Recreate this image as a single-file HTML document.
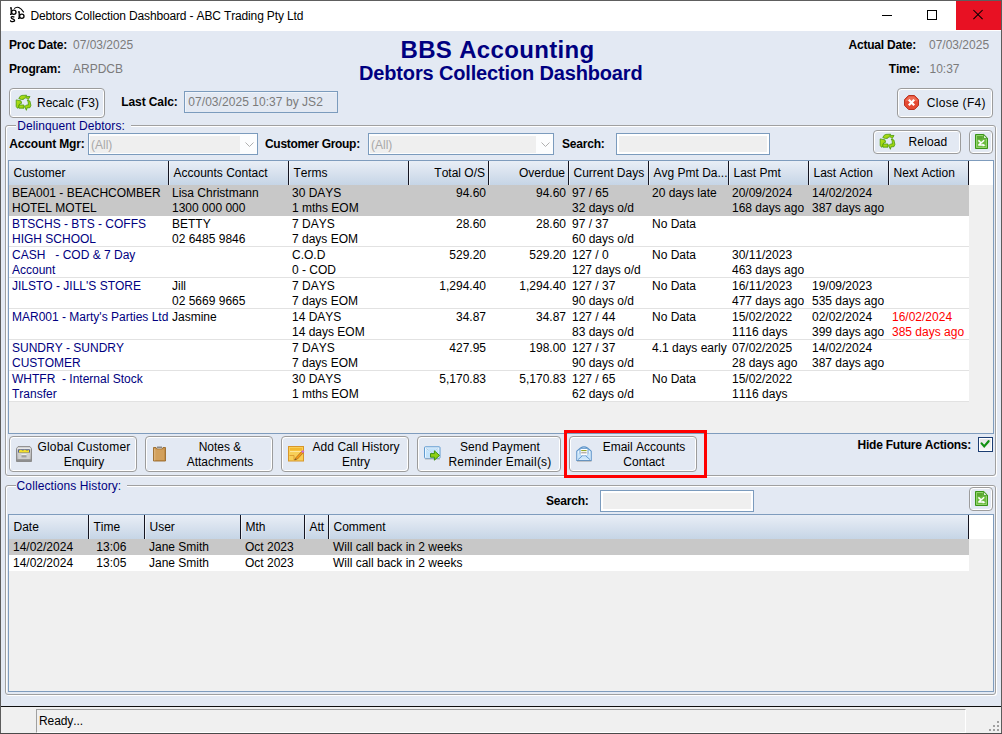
<!DOCTYPE html>
<html><head><meta charset="utf-8"><style>
*{margin:0;padding:0;box-sizing:content-box}
html,body{width:1002px;height:734px;overflow:hidden;background:#E3E9F3}
body{position:relative;font-family:"Liberation Sans",sans-serif;font-kerning:none;}
.t{position:absolute;white-space:pre;}
.r{position:absolute;}
.btn{border:1px solid #9c9c9c;border-radius:4px;box-shadow:inset 1px 1px 0 #fff, inset -1px -1px 0 #fff;background:#E3E9F3;}
.grp{border:1px solid #a0a0a0;border-radius:3px;box-shadow:inset 1px 1px 0 #fff, 1px 1px 0 #fff;}
svg{position:absolute;overflow:visible}
</style></head><body>

<div class="r" style="left:0px;top:0px;width:1002px;height:1px;background:#5e5e5e;"></div>
<div class="r" style="left:0px;top:0px;width:1px;height:734px;background:#5c5c5c;"></div>
<div class="r" style="left:1001px;top:0px;width:1px;height:734px;background:#5c5c5c;"></div>
<div class="r" style="left:0px;top:733px;width:1002px;height:1px;background:#4a4a4a;"></div>
<div class="r" style="left:1px;top:1px;width:1000px;height:30px;background:#fff;"></div>
<div class="r" style="left:956px;top:1px;width:45px;height:29px;background:#E81123;"></div>
<svg style="left:0;top:0" width="40" height="31" viewBox="0 0 40 31">
<g fill="none" stroke="#000" stroke-width="1.3">
<path d="M10 7.9 H11.2 V14.4 M10 14.4 H11.6"/>
<ellipse cx="13.8" cy="12.2" rx="2.2" ry="2.1"/>
<path d="M18 11.9 H19.2 V18.4 M18 18.4 H19.6"/>
<ellipse cx="21.8" cy="16.2" rx="2.2" ry="2.1"/>
<path d="M14.2 8.6 Q18.6 4.6 23.8 12.4" stroke-width="1.1"/>
<path d="M14.4 17.2 Q12.8 16 11.4 16.9 Q10.6 18.2 12.6 18.9 Q14.9 19.6 14.5 21.1 Q13 22.3 10.6 21.2 M10.6 20.2 V21.4" stroke-width="1.25"/>
</g></svg>
<div class="t" style="left:30.4px;top:8.84px;font-size:12px;line-height:14px;color:#000;letter-spacing:-0.147px;">Debtors Collection Dashboard - ABC Trading Pty Ltd</div>
<div class="r" style="left:882px;top:15px;width:10px;height:1px;background:#000;"></div>
<div class="r" style="left:927px;top:10px;width:8px;height:8px;border:1px solid #000;"></div>
<svg style="left:956px;top:1px" width="45" height="29" viewBox="0 0 45 29">
<path d="M17.4 9 L26.6 18.2 M26.6 9 L17.4 18.2" stroke="#000" stroke-width="1.05" fill="none"/></svg>
<div class="t" style="left:9px;top:37.84px;font-size:12px;line-height:14px;color:#000;font-weight:bold;letter-spacing:-0.2px;">Proc Date:</div>
<div class="t" style="left:73px;top:37.84px;font-size:12px;line-height:14px;color:#7B7B7B;">07/03/2025</div>
<div class="t" style="left:9px;top:61.84px;font-size:12px;line-height:14px;color:#000;font-weight:bold;letter-spacing:-0.2px;">Program:</div>
<div class="t" style="left:73px;top:61.84px;font-size:12px;line-height:14px;color:#7B7B7B;">ARPDCB</div>
<div class="t" style="left:400.5px;top:35.68px;font-size:24px;line-height:28px;color:#000080;font-weight:bold;letter-spacing:0.33px;">BBS Accounting</div>
<div class="t" style="left:359px;top:61.57px;font-size:20px;line-height:23px;color:#000080;font-weight:bold;letter-spacing:-0.155px;">Debtors Collection Dashboard</div>
<div class="t" style="left:848.5px;top:37.84px;font-size:12px;line-height:14px;color:#000;font-weight:bold;letter-spacing:-0.2px;">Actual Date:</div>
<div class="t" style="left:929px;top:37.84px;font-size:12px;line-height:14px;color:#7B7B7B;">07/03/2025</div>
<div class="t" style="left:888.8px;top:61.84px;font-size:12px;line-height:14px;color:#000;font-weight:bold;letter-spacing:-0.2px;">Time:</div>
<div class="t" style="left:929.5px;top:61.84px;font-size:12px;line-height:14px;color:#7B7B7B;">10:37</div>
<div class="r btn" style="left:9px;top:88px;width:94px;height:28px;"></div>
<svg style="left:16px;top:95px" width="16" height="16" viewBox="0 0 16 16">
<defs><linearGradient id="rg16" x1="0" y1="0" x2="1" y2="1"><stop offset="0" stop-color="#b8e41a"/><stop offset="1" stop-color="#8cc80c"/></linearGradient></defs>
<g stroke="#4a9a08" stroke-width="0.8" fill="url(#rg16)" stroke-linejoin="round">
<path d="M2.8 3.6 Q3.6 0.8 6 0.4 L10.6 0.2 L9.8 1.4 L14 1.5 L12.2 4.6 L11.2 3.4 Q10.2 2.6 8.6 3 L7.8 4.2 L5.6 4.6 Z"/>
<path d="M0.2 4.9 L5 5.9 L5.6 8.3 L3.6 9 L2.8 12.4 L1.4 13.2 L0.2 11.4 Z"/>
<path d="M2.9 10 H8 V13.2 H2.9 Z"/>
<path d="M11.2 5.1 L13.9 6 L14.9 10.4 L14 12.6 L11 12.9 L10.4 15.3 L8.6 11.4 L11 9.9 L12.4 10 L12.2 6.9 Z"/>
</g></svg>
<div class="t" style="left:37px;top:95.84px;font-size:12px;line-height:14px;color:#000;">Recalc (F3)</div>
<div class="t" style="left:121.3px;top:94.84px;font-size:12px;line-height:14px;color:#000;font-weight:bold;letter-spacing:-0.1px;">Last Calc:</div>
<div class="r" style="left:184px;top:91px;width:152px;height:20px;border:1px solid #7b9bbd;background:#E3E9F3;box-shadow:inset 1px 1px 0 #F0F4FA;"></div>
<div class="t" style="left:188.3px;top:94.84px;font-size:12px;line-height:14px;color:#7B7B7B;letter-spacing:0.05px;">07/03/2025 10:37 by JS2</div>
<div class="r btn" style="left:897px;top:88px;width:94px;height:28px;"></div>
<svg style="left:904px;top:95px" width="15" height="15" viewBox="0 0 15 15">
<path d="M4.6 0.5 H10.4 L14.5 4.6 V10.4 L10.4 14.5 H4.6 L0.5 10.4 V4.6 Z" fill="#e44a33" stroke="#b83220" stroke-width="1"/>
<path d="M5 1.6 H10 L13.4 5 V6.5 Q7.5 4.2 1.6 6.5 V5 Z" fill="#f58a72" opacity="0.55"/>
<path d="M4.8 4.8 L10.2 10.2 M10.2 4.8 L4.8 10.2" stroke="#fff" stroke-width="2.3"/>
</svg>
<div class="t" style="left:926.8px;top:95.84px;font-size:12px;line-height:14px;color:#000;letter-spacing:0.3px;">Close (F4)</div>
<div class="r grp" style="left:5px;top:125px;width:989px;height:349px;"></div>
<div class="r" style="left:16px;top:123px;width:115px;height:5px;background:#E3E9F3;"></div>
<div class="t" style="left:17.3px;top:118.84px;font-size:12px;line-height:14px;color:#000080;letter-spacing:0.08px;">Delinquent Debtors:</div>
<div class="t" style="left:9.3px;top:136.84px;font-size:12px;line-height:14px;color:#000;font-weight:bold;letter-spacing:-0.17px;">Account Mgr:</div>
<div class="r" style="left:88px;top:133px;width:168px;height:20px;border:1px solid #7b9bbd;background:#FCFDFE;"></div>
<div class="r" style="left:90px;top:136px;width:150px;height:17px;background:#EFEFEF;"></div>
<svg style="left:245px;top:142px" width="9" height="6" viewBox="0 0 9 6"><path d="M0.5 0.5 L4.5 4.5 L8.5 0.5" stroke="#b0b0b0" stroke-width="1" fill="none"/></svg>
<div class="t" style="left:91px;top:137.84px;font-size:12px;line-height:14px;color:#A8A8A8;">(All)</div>
<div class="t" style="left:265px;top:136.84px;font-size:12px;line-height:14px;color:#000;font-weight:bold;letter-spacing:-0.3px;">Customer Group:</div>
<div class="r" style="left:368px;top:133px;width:184px;height:20px;border:1px solid #7b9bbd;background:#FCFDFE;"></div>
<div class="r" style="left:370px;top:136px;width:166px;height:17px;background:#EFEFEF;"></div>
<svg style="left:541px;top:142px" width="9" height="6" viewBox="0 0 9 6"><path d="M0.5 0.5 L4.5 4.5 L8.5 0.5" stroke="#b0b0b0" stroke-width="1" fill="none"/></svg>
<div class="t" style="left:371px;top:137.84px;font-size:12px;line-height:14px;color:#A8A8A8;">(All)</div>
<div class="t" style="left:562px;top:136.84px;font-size:12px;line-height:14px;color:#000;font-weight:bold;letter-spacing:-0.2px;">Search:</div>
<div class="r" style="left:616px;top:133px;width:152px;height:20px;border:1px solid #7b9bbd;background:#fff;"></div>
<div class="r" style="left:619px;top:136px;width:148px;height:16px;background:#EFEFEF;"></div>
<div class="r btn" style="left:873px;top:130px;width:86px;height:22px;"></div>
<svg style="left:880px;top:134px" width="16" height="16" viewBox="0 0 16 16">
<defs><linearGradient id="rg880" x1="0" y1="0" x2="1" y2="1"><stop offset="0" stop-color="#b8e41a"/><stop offset="1" stop-color="#8cc80c"/></linearGradient></defs>
<g stroke="#4a9a08" stroke-width="0.8" fill="url(#rg880)" stroke-linejoin="round">
<path d="M2.8 3.6 Q3.6 0.8 6 0.4 L10.6 0.2 L9.8 1.4 L14 1.5 L12.2 4.6 L11.2 3.4 Q10.2 2.6 8.6 3 L7.8 4.2 L5.6 4.6 Z"/>
<path d="M0.2 4.9 L5 5.9 L5.6 8.3 L3.6 9 L2.8 12.4 L1.4 13.2 L0.2 11.4 Z"/>
<path d="M2.9 10 H8 V13.2 H2.9 Z"/>
<path d="M11.2 5.1 L13.9 6 L14.9 10.4 L14 12.6 L11 12.9 L10.4 15.3 L8.6 11.4 L11 9.9 L12.4 10 L12.2 6.9 Z"/>
</g></svg>
<div class="t" style="left:908.5px;top:134.84px;font-size:12px;line-height:14px;color:#000;letter-spacing:0.15px;">Reload</div>
<div class="r btn" style="left:969px;top:130px;width:22px;height:22px;"></div>
<svg style="left:975px;top:134px" width="14" height="16" viewBox="0 0 14 16">
<path d="M0.5 0.5 H8.8 L12.5 4.2 V14.5 H0.5 Z" fill="#6cbb40" stroke="#3a9418" stroke-width="1"/>
<path d="M1.5 1.5 H8.4 L11.5 4.6 V13.5 H1.5 Z" fill="none" stroke="#96d672" stroke-width="0.9"/>
<rect x="2" y="2" width="5.5" height="3.5" fill="#5aa832"/>
<path d="M8.6 0.8 L12.2 4.4 H8.6 Z" fill="#fff" stroke="#3a9418" stroke-width="0.8"/>
<path d="M3.4 6.4 L6.4 9.2 M9.2 6.3 L3.8 10.9 M3.2 10.9 H8" stroke="#fff" stroke-width="1.5" fill="none"/>
<path d="M7.4 9.4 L10.6 11.2 L7.8 12.6 Z" fill="#fff"/>
</svg>
<div class="r" style="left:8px;top:160px;width:984px;height:272px;border:1px solid #7f9cbd;background:#F0F0F0;"></div>
<div class="r" style="left:9px;top:161px;width:960px;height:24px;background:linear-gradient(#E9EEF6,#C6D5E6);"></div>
<div class="r" style="left:969px;top:161px;width:24px;height:24px;background:#fff;"></div>
<div class="r" style="left:168px;top:161px;width:1px;height:24px;background:#141420;"></div>
<div class="r" style="left:169px;top:161px;width:1px;height:24px;background:rgba(255,255,255,0.5);"></div>
<div class="r" style="left:288px;top:161px;width:1px;height:24px;background:#141420;"></div>
<div class="r" style="left:289px;top:161px;width:1px;height:24px;background:rgba(255,255,255,0.5);"></div>
<div class="r" style="left:408px;top:161px;width:1px;height:24px;background:#141420;"></div>
<div class="r" style="left:409px;top:161px;width:1px;height:24px;background:rgba(255,255,255,0.5);"></div>
<div class="r" style="left:488px;top:161px;width:1px;height:24px;background:#141420;"></div>
<div class="r" style="left:489px;top:161px;width:1px;height:24px;background:rgba(255,255,255,0.5);"></div>
<div class="r" style="left:568px;top:161px;width:1px;height:24px;background:#141420;"></div>
<div class="r" style="left:569px;top:161px;width:1px;height:24px;background:rgba(255,255,255,0.5);"></div>
<div class="r" style="left:648px;top:161px;width:1px;height:24px;background:#141420;"></div>
<div class="r" style="left:649px;top:161px;width:1px;height:24px;background:rgba(255,255,255,0.5);"></div>
<div class="r" style="left:728px;top:161px;width:1px;height:24px;background:#141420;"></div>
<div class="r" style="left:729px;top:161px;width:1px;height:24px;background:rgba(255,255,255,0.5);"></div>
<div class="r" style="left:808px;top:161px;width:1px;height:24px;background:#141420;"></div>
<div class="r" style="left:809px;top:161px;width:1px;height:24px;background:rgba(255,255,255,0.5);"></div>
<div class="r" style="left:888px;top:161px;width:1px;height:24px;background:#141420;"></div>
<div class="r" style="left:889px;top:161px;width:1px;height:24px;background:rgba(255,255,255,0.5);"></div>
<div class="r" style="left:968px;top:161px;width:1px;height:24px;background:#141420;"></div>
<div class="r" style="left:969px;top:161px;width:1px;height:24px;background:rgba(255,255,255,0.5);"></div>
<div class="r" style="left:9px;top:185px;width:960px;height:217px;background:#fff;"></div>
<div class="r" style="left:9px;top:185px;width:960px;height:31px;background:#C8C8C8;"></div>
<div class="r" style="left:9px;top:246px;width:960px;height:1px;background:#E2E2E2;"></div>
<div class="r" style="left:9px;top:277px;width:960px;height:1px;background:#E2E2E2;"></div>
<div class="r" style="left:9px;top:308px;width:960px;height:1px;background:#E2E2E2;"></div>
<div class="r" style="left:9px;top:339px;width:960px;height:1px;background:#E2E2E2;"></div>
<div class="r" style="left:9px;top:370px;width:960px;height:1px;background:#E2E2E2;"></div>
<div class="r" style="left:9px;top:401px;width:960px;height:1px;background:#E2E2E2;"></div>
<div class="t" style="left:13.5px;top:165.84px;font-size:12px;line-height:14px;color:#000;">Customer</div>
<div class="t" style="left:173.5px;top:165.84px;font-size:12px;line-height:14px;color:#000;">Accounts Contact</div>
<div class="t" style="left:293.5px;top:165.84px;font-size:12px;line-height:14px;color:#000;">Terms</div>
<div class="t" style="right:517px;top:165.84px;font-size:12px;line-height:14px;color:#000;text-align:right;">Total O/S</div>
<div class="t" style="right:437px;top:165.84px;font-size:12px;line-height:14px;color:#000;text-align:right;">Overdue</div>
<div class="t" style="left:573.5px;top:165.84px;font-size:12px;line-height:14px;color:#000;">Current Days</div>
<div class="t" style="left:653.5px;top:165.84px;font-size:12px;line-height:14px;color:#000;">Avg Pmt Da...</div>
<div class="t" style="left:733.5px;top:165.84px;font-size:12px;line-height:14px;color:#000;">Last Pmt</div>
<div class="t" style="left:813.5px;top:165.84px;font-size:12px;line-height:14px;color:#000;">Last Action</div>
<div class="t" style="left:893.5px;top:165.84px;font-size:12px;line-height:14px;color:#000;">Next Action</div>
<div class="t" style="left:12px;top:185.84px;font-size:12px;line-height:14px;color:#000;">BEA001 - BEACHCOMBER</div>
<div class="t" style="left:12px;top:200.84px;font-size:12px;line-height:14px;color:#000;">HOTEL MOTEL</div>
<div class="t" style="left:172px;top:185.84px;font-size:12px;line-height:14px;color:#000;">Lisa Christmann</div>
<div class="t" style="left:172px;top:200.84px;font-size:12px;line-height:14px;color:#000;">1300 000 000</div>
<div class="t" style="left:292px;top:185.84px;font-size:12px;line-height:14px;color:#000;">30 DAYS</div>
<div class="t" style="left:292px;top:200.84px;font-size:12px;line-height:14px;color:#000;">1 mths EOM</div>
<div class="t" style="right:516px;top:185.84px;font-size:12px;line-height:14px;color:#000;text-align:right;">94.60</div>
<div class="t" style="right:436px;top:185.84px;font-size:12px;line-height:14px;color:#000;text-align:right;">94.60</div>
<div class="t" style="left:572px;top:185.84px;font-size:12px;line-height:14px;color:#000;">97 / 65</div>
<div class="t" style="left:572px;top:200.84px;font-size:12px;line-height:14px;color:#000;">32 days o/d</div>
<div class="t" style="left:652px;top:185.84px;font-size:12px;line-height:14px;color:#000;">20 days late</div>
<div class="t" style="left:732px;top:185.84px;font-size:12px;line-height:14px;color:#000;">20/09/2024</div>
<div class="t" style="left:732px;top:200.84px;font-size:12px;line-height:14px;color:#000;">168 days ago</div>
<div class="t" style="left:812px;top:185.84px;font-size:12px;line-height:14px;color:#000;">14/02/2024</div>
<div class="t" style="left:812px;top:200.84px;font-size:12px;line-height:14px;color:#000;">387 days ago</div>
<div class="t" style="left:12px;top:216.84px;font-size:12px;line-height:14px;color:#000080;">BTSCHS - BTS - COFFS</div>
<div class="t" style="left:12px;top:231.84px;font-size:12px;line-height:14px;color:#000080;">HIGH SCHOOL</div>
<div class="t" style="left:172px;top:216.84px;font-size:12px;line-height:14px;color:#000;">BETTY</div>
<div class="t" style="left:172px;top:231.84px;font-size:12px;line-height:14px;color:#000;">02 6485 9846</div>
<div class="t" style="left:292px;top:216.84px;font-size:12px;line-height:14px;color:#000;">7 DAYS</div>
<div class="t" style="left:292px;top:231.84px;font-size:12px;line-height:14px;color:#000;">7 days EOM</div>
<div class="t" style="right:516px;top:216.84px;font-size:12px;line-height:14px;color:#000;text-align:right;">28.60</div>
<div class="t" style="right:436px;top:216.84px;font-size:12px;line-height:14px;color:#000;text-align:right;">28.60</div>
<div class="t" style="left:572px;top:216.84px;font-size:12px;line-height:14px;color:#000;">97 / 37</div>
<div class="t" style="left:572px;top:231.84px;font-size:12px;line-height:14px;color:#000;">60 days o/d</div>
<div class="t" style="left:652px;top:216.84px;font-size:12px;line-height:14px;color:#000;">No Data</div>
<div class="t" style="left:12px;top:247.84px;font-size:12px;line-height:14px;color:#000080;">CASH   - COD &amp; 7 Day</div>
<div class="t" style="left:12px;top:262.84px;font-size:12px;line-height:14px;color:#000080;">Account</div>
<div class="t" style="left:292px;top:247.84px;font-size:12px;line-height:14px;color:#000;">C.O.D</div>
<div class="t" style="left:292px;top:262.84px;font-size:12px;line-height:14px;color:#000;">0 - COD</div>
<div class="t" style="right:516px;top:247.84px;font-size:12px;line-height:14px;color:#000;text-align:right;">529.20</div>
<div class="t" style="right:436px;top:247.84px;font-size:12px;line-height:14px;color:#000;text-align:right;">529.20</div>
<div class="t" style="left:572px;top:247.84px;font-size:12px;line-height:14px;color:#000;">127 / 0</div>
<div class="t" style="left:572px;top:262.84px;font-size:12px;line-height:14px;color:#000;">127 days o/d</div>
<div class="t" style="left:652px;top:247.84px;font-size:12px;line-height:14px;color:#000;">No Data</div>
<div class="t" style="left:732px;top:247.84px;font-size:12px;line-height:14px;color:#000;">30/11/2023</div>
<div class="t" style="left:732px;top:262.84px;font-size:12px;line-height:14px;color:#000;">463 days ago</div>
<div class="t" style="left:12px;top:278.84px;font-size:12px;line-height:14px;color:#000080;">JILSTO - JILL'S STORE</div>
<div class="t" style="left:172px;top:278.84px;font-size:12px;line-height:14px;color:#000;">Jill</div>
<div class="t" style="left:172px;top:293.84px;font-size:12px;line-height:14px;color:#000;">02 5669 9665</div>
<div class="t" style="left:292px;top:278.84px;font-size:12px;line-height:14px;color:#000;">7 DAYS</div>
<div class="t" style="left:292px;top:293.84px;font-size:12px;line-height:14px;color:#000;">7 days EOM</div>
<div class="t" style="right:516px;top:278.84px;font-size:12px;line-height:14px;color:#000;text-align:right;">1,294.40</div>
<div class="t" style="right:436px;top:278.84px;font-size:12px;line-height:14px;color:#000;text-align:right;">1,294.40</div>
<div class="t" style="left:572px;top:278.84px;font-size:12px;line-height:14px;color:#000;">127 / 37</div>
<div class="t" style="left:572px;top:293.84px;font-size:12px;line-height:14px;color:#000;">90 days o/d</div>
<div class="t" style="left:652px;top:278.84px;font-size:12px;line-height:14px;color:#000;">No Data</div>
<div class="t" style="left:732px;top:278.84px;font-size:12px;line-height:14px;color:#000;">16/11/2023</div>
<div class="t" style="left:732px;top:293.84px;font-size:12px;line-height:14px;color:#000;">477 days ago</div>
<div class="t" style="left:812px;top:278.84px;font-size:12px;line-height:14px;color:#000;">19/09/2023</div>
<div class="t" style="left:812px;top:293.84px;font-size:12px;line-height:14px;color:#000;">535 days ago</div>
<div class="t" style="left:12px;top:309.84px;font-size:12px;line-height:14px;color:#000080;">MAR001 - Marty's Parties Ltd</div>
<div class="t" style="left:172px;top:309.84px;font-size:12px;line-height:14px;color:#000;">Jasmine</div>
<div class="t" style="left:292px;top:309.84px;font-size:12px;line-height:14px;color:#000;">14 DAYS</div>
<div class="t" style="left:292px;top:324.84px;font-size:12px;line-height:14px;color:#000;">14 days EOM</div>
<div class="t" style="right:516px;top:309.84px;font-size:12px;line-height:14px;color:#000;text-align:right;">34.87</div>
<div class="t" style="right:436px;top:309.84px;font-size:12px;line-height:14px;color:#000;text-align:right;">34.87</div>
<div class="t" style="left:572px;top:309.84px;font-size:12px;line-height:14px;color:#000;">127 / 44</div>
<div class="t" style="left:572px;top:324.84px;font-size:12px;line-height:14px;color:#000;">83 days o/d</div>
<div class="t" style="left:652px;top:309.84px;font-size:12px;line-height:14px;color:#000;">No Data</div>
<div class="t" style="left:732px;top:309.84px;font-size:12px;line-height:14px;color:#000;">15/02/2022</div>
<div class="t" style="left:732px;top:324.84px;font-size:12px;line-height:14px;color:#000;">1116 days</div>
<div class="t" style="left:812px;top:309.84px;font-size:12px;line-height:14px;color:#000;">02/02/2024</div>
<div class="t" style="left:812px;top:324.84px;font-size:12px;line-height:14px;color:#000;">399 days ago</div>
<div class="t" style="left:892px;top:309.84px;font-size:12px;line-height:14px;color:#FF0000;">16/02/2024</div>
<div class="t" style="left:892px;top:324.84px;font-size:12px;line-height:14px;color:#FF0000;">385 days ago</div>
<div class="t" style="left:12px;top:340.84px;font-size:12px;line-height:14px;color:#000080;">SUNDRY - SUNDRY</div>
<div class="t" style="left:12px;top:355.84px;font-size:12px;line-height:14px;color:#000080;">CUSTOMER</div>
<div class="t" style="left:292px;top:340.84px;font-size:12px;line-height:14px;color:#000;">7 DAYS</div>
<div class="t" style="left:292px;top:355.84px;font-size:12px;line-height:14px;color:#000;">7 days EOM</div>
<div class="t" style="right:516px;top:340.84px;font-size:12px;line-height:14px;color:#000;text-align:right;">427.95</div>
<div class="t" style="right:436px;top:340.84px;font-size:12px;line-height:14px;color:#000;text-align:right;">198.00</div>
<div class="t" style="left:572px;top:340.84px;font-size:12px;line-height:14px;color:#000;">127 / 37</div>
<div class="t" style="left:572px;top:355.84px;font-size:12px;line-height:14px;color:#000;">90 days o/d</div>
<div class="t" style="left:652px;top:340.84px;font-size:12px;line-height:14px;color:#000;">4.1 days early</div>
<div class="t" style="left:732px;top:340.84px;font-size:12px;line-height:14px;color:#000;">07/02/2025</div>
<div class="t" style="left:732px;top:355.84px;font-size:12px;line-height:14px;color:#000;">28 days ago</div>
<div class="t" style="left:812px;top:340.84px;font-size:12px;line-height:14px;color:#000;">14/02/2024</div>
<div class="t" style="left:812px;top:355.84px;font-size:12px;line-height:14px;color:#000;">387 days ago</div>
<div class="t" style="left:12px;top:371.84px;font-size:12px;line-height:14px;color:#000080;">WHTFR  - Internal Stock</div>
<div class="t" style="left:12px;top:386.84px;font-size:12px;line-height:14px;color:#000080;">Transfer</div>
<div class="t" style="left:292px;top:371.84px;font-size:12px;line-height:14px;color:#000;">30 DAYS</div>
<div class="t" style="left:292px;top:386.84px;font-size:12px;line-height:14px;color:#000;">1 mths EOM</div>
<div class="t" style="right:516px;top:371.84px;font-size:12px;line-height:14px;color:#000;text-align:right;">5,170.83</div>
<div class="t" style="right:436px;top:371.84px;font-size:12px;line-height:14px;color:#000;text-align:right;">5,170.83</div>
<div class="t" style="left:572px;top:371.84px;font-size:12px;line-height:14px;color:#000;">127 / 65</div>
<div class="t" style="left:572px;top:386.84px;font-size:12px;line-height:14px;color:#000;">62 days o/d</div>
<div class="t" style="left:652px;top:371.84px;font-size:12px;line-height:14px;color:#000;">No Data</div>
<div class="t" style="left:732px;top:371.84px;font-size:12px;line-height:14px;color:#000;">15/02/2022</div>
<div class="t" style="left:732px;top:386.84px;font-size:12px;line-height:14px;color:#000;">1116 days</div>
<div class="r btn" style="left:9px;top:436px;width:126px;height:34px;"></div>
<svg style="left:16px;top:446px" width="16" height="16" viewBox="0 0 16 16">
<defs><linearGradient id="dg" x1="0" y1="0" x2="0" y2="1"><stop offset="0" stop-color="#d8d8d8"/><stop offset="1" stop-color="#a8a8a8"/></linearGradient></defs>
<path d="M2 0.6 H14 L15.5 2.6 V15.5 H0.5 V2.6 Z" fill="url(#dg)" stroke="#8c8c8c" stroke-width="1"/>
<rect x="1.5" y="1.8" width="13" height="1.4" fill="#e8e8e8"/>
<rect x="2.2" y="3.4" width="11.6" height="3.2" fill="#3b4a7a"/>
<path d="M3 4.6 L4.5 3.8 L7 4.6 L8.5 3.8 L11 4.6 L13 4 V6.6 H3 Z" fill="#f5e02a"/>
<rect x="2.2" y="7" width="11.6" height="6" fill="#d0d0d0"/>
<rect x="5.5" y="8.2" width="5" height="1" fill="#f4f4f4"/>
<rect x="5.5" y="9.2" width="5" height="2.2" fill="#a0a0a0"/>
<rect x="1" y="13.4" width="14" height="1.8" fill="#8e8e8e"/>
</svg>
<div class="t" style="left:-66.0px;width:300px;top:439.84px;font-size:12px;line-height:14px;color:#000;text-align:center;letter-spacing:0.2px;">Global Customer</div>
<div class="t" style="left:-66.0px;width:300px;top:454.84px;font-size:12px;line-height:14px;color:#000;text-align:center;">Enquiry</div>
<div class="r btn" style="left:145px;top:436px;width:126px;height:34px;"></div>
<svg style="left:152px;top:446px" width="16" height="16" viewBox="0 0 16 16">
<rect x="5" y="0.5" width="5" height="1.5" fill="#8a8a8a"/>
<path d="M1.5 1.5 H4 L5 3 H10 L11 1.5 H13.5 V15 H1.5 Z" fill="#c48f48" stroke="#9a6a2a" stroke-width="0.9"/>
<rect x="3" y="3.5" width="9" height="10.5" fill="#d2a05c"/>
<rect x="2.2" y="2.5" width="1" height="12" fill="#f0d0a0" opacity="0.7"/>
</svg>
<div class="t" style="left:70.0px;width:300px;top:439.84px;font-size:12px;line-height:14px;color:#000;text-align:center;">Notes &amp;</div>
<div class="t" style="left:70.0px;width:300px;top:454.84px;font-size:12px;line-height:14px;color:#000;text-align:center;">Attachments</div>
<div class="r btn" style="left:281px;top:436px;width:126px;height:34px;"></div>
<svg style="left:288px;top:446px" width="17" height="16" viewBox="0 0 17 16">
<rect x="0.5" y="0.5" width="15" height="14.5" fill="#f8cf58" stroke="#d8962a" stroke-width="1"/>
<rect x="2" y="2" width="12" height="2.5" fill="#f3b82e"/>
<rect x="2" y="5" width="12" height="1" fill="#fde7a0"/>
<path d="M1.5 9.5 H6 V14" fill="none" stroke="#d8962a" stroke-width="0.8"/>
<path d="M6.5 14 L8 11.5 L14 5 L15.5 6.5 L9.5 13 Z" fill="#f59a1a" stroke="#8a4a10" stroke-width="0.5"/>
<path d="M13.2 5.6 L14.8 4 L16.4 5.6 L14.8 7.2 Z" fill="#d070d8"/>
<path d="M6.5 14 L8 12.4 L8.6 13.2 Z" fill="#444"/>
</svg>
<div class="t" style="left:206.0px;width:300px;top:439.84px;font-size:12px;line-height:14px;color:#000;text-align:center;letter-spacing:0.07px;">Add Call History</div>
<div class="t" style="left:206.0px;width:300px;top:454.84px;font-size:12px;line-height:14px;color:#000;text-align:center;">Entry</div>
<div class="r btn" style="left:417px;top:436px;width:142px;height:34px;"></div>
<svg style="left:424px;top:446px" width="17" height="16" viewBox="0 0 17 16">
<rect x="0.5" y="0.8" width="15.5" height="11.5" rx="0.8" fill="#eaf6ff" stroke="#5f9ad0" stroke-width="1"/>
<rect x="2" y="2.2" width="12.5" height="9" fill="#c2e2fa"/>
<path d="M2 2.2 L8.2 7.4 L14.4 2.2" fill="none" stroke="#fff" stroke-width="1.2"/>
<path d="M2.2 2.4 L8.2 7.2 L14.2 2.4" fill="none" stroke="#6fa6d6" stroke-width="0.6"/>
<rect x="1" y="12.5" width="15" height="1.2" fill="#a8a8a8" opacity="0.6"/>
<path d="M6.5 7.6 H10.4 V4.8 L15.5 9.4 L10.4 14.2 V11.2 H6.5 Z" fill="#8fd014" stroke="#2f8a08" stroke-width="0.9" stroke-linejoin="round"/>
</svg>
<div class="t" style="left:350.0px;width:300px;top:439.84px;font-size:12px;line-height:14px;color:#000;text-align:center;letter-spacing:0.12px;">Send Payment</div>
<div class="t" style="left:350.0px;width:300px;top:454.84px;font-size:12px;line-height:14px;color:#000;text-align:center;letter-spacing:0.22px;">Reminder Email(s)</div>
<div class="r btn" style="left:569px;top:436px;width:126px;height:34px;"></div>
<svg style="left:576px;top:446px" width="16" height="16" viewBox="0 0 16 16">
<path d="M0.8 5.2 L4.5 2 Q8 -0.2 11.5 2 L15.2 5.2 V14.5 H0.8 Z" fill="#eaf6ff" stroke="#5b93c9" stroke-width="1.1"/>
<rect x="4" y="2.4" width="8" height="7.5" rx="1" fill="#fff" stroke="#5b93c9" stroke-width="0.9"/>
<rect x="5.2" y="4.1" width="5.4" height="1" fill="#8aa010"/>
<rect x="5.2" y="6.3" width="5.4" height="1" fill="#9a8e86"/>
<path d="M1.6 6.2 L8 11 L14.4 6.2 V13.8 H1.6 Z" fill="#c5e4fa" opacity="0.8"/>
<path d="M2 13.6 L6.4 9.8 M14 13.6 L9.6 9.8" stroke="#5b93c9" stroke-width="0.9"/>
<rect x="1" y="14.7" width="14.5" height="1" fill="#9a9a9a" opacity="0.7"/>
</svg>
<div class="t" style="left:494.0px;width:300px;top:439.84px;font-size:12px;line-height:14px;color:#000;text-align:center;">Email Accounts</div>
<div class="t" style="left:494.0px;width:300px;top:454.84px;font-size:12px;line-height:14px;color:#000;text-align:center;">Contact</div>
<div class="r" style="left:564px;top:430px;width:137px;height:42px;border:3px solid #FF0000;"></div>
<div class="t" style="left:857.5px;top:437.84px;font-size:12px;line-height:14px;color:#000;font-weight:bold;letter-spacing:-0.22px;">Hide Future Actions:</div>
<svg style="left:978px;top:437px" width="15" height="15" viewBox="0 0 15 15">
<rect x="0.5" y="0.5" width="14" height="14" fill="#fff" stroke="#1c3d72" stroke-width="1"/>
<rect x="2" y="2" width="11" height="11" fill="url(#cbg)"/>
<defs><linearGradient id="cbg" x1="0" y1="0" x2="0" y2="1"><stop offset="0" stop-color="#e4e4e4"/><stop offset="1" stop-color="#f6f6f6"/></linearGradient></defs>
<path d="M3.6 6.4 L6.2 9.4 L10.6 4.2" stroke="#109010" stroke-width="2.2" fill="none" stroke-linecap="round"/>
</svg>
<div class="r grp" style="left:5px;top:485px;width:989px;height:208px;"></div>
<div class="r" style="left:16px;top:483px;width:111px;height:5px;background:#E3E9F3;"></div>
<div class="t" style="left:16.6px;top:478.84px;font-size:12px;line-height:14px;color:#000080;letter-spacing:0.1px;">Collections History:</div>
<div class="t" style="left:546px;top:493.84px;font-size:12px;line-height:14px;color:#000;font-weight:bold;letter-spacing:-0.2px;">Search:</div>
<div class="r" style="left:600px;top:490px;width:152px;height:20px;border:1px solid #7b9bbd;background:#fff;"></div>
<div class="r" style="left:603px;top:493px;width:148px;height:16px;background:#EFEFEF;"></div>
<div class="r btn" style="left:969px;top:487px;width:22px;height:22px;"></div>
<svg style="left:975px;top:491px" width="14" height="16" viewBox="0 0 14 16">
<path d="M0.5 0.5 H8.8 L12.5 4.2 V14.5 H0.5 Z" fill="#6cbb40" stroke="#3a9418" stroke-width="1"/>
<path d="M1.5 1.5 H8.4 L11.5 4.6 V13.5 H1.5 Z" fill="none" stroke="#96d672" stroke-width="0.9"/>
<rect x="2" y="2" width="5.5" height="3.5" fill="#5aa832"/>
<path d="M8.6 0.8 L12.2 4.4 H8.6 Z" fill="#fff" stroke="#3a9418" stroke-width="0.8"/>
<path d="M3.4 6.4 L6.4 9.2 M9.2 6.3 L3.8 10.9 M3.2 10.9 H8" stroke="#fff" stroke-width="1.5" fill="none"/>
<path d="M7.4 9.4 L10.6 11.2 L7.8 12.6 Z" fill="#fff"/>
</svg>
<div class="r" style="left:8px;top:514px;width:984px;height:176px;border:1px solid #7f9cbd;background:#F0F0F0;"></div>
<div class="r" style="left:9px;top:515px;width:960px;height:24px;background:linear-gradient(#E9EEF6,#C6D5E6);"></div>
<div class="r" style="left:969px;top:515px;width:24px;height:24px;background:#fff;"></div>
<div class="r" style="left:88px;top:515px;width:1px;height:24px;background:#141420;"></div>
<div class="r" style="left:89px;top:515px;width:1px;height:24px;background:rgba(255,255,255,0.5);"></div>
<div class="r" style="left:144px;top:515px;width:1px;height:24px;background:#141420;"></div>
<div class="r" style="left:145px;top:515px;width:1px;height:24px;background:rgba(255,255,255,0.5);"></div>
<div class="r" style="left:240px;top:515px;width:1px;height:24px;background:#141420;"></div>
<div class="r" style="left:241px;top:515px;width:1px;height:24px;background:rgba(255,255,255,0.5);"></div>
<div class="r" style="left:304px;top:515px;width:1px;height:24px;background:#141420;"></div>
<div class="r" style="left:305px;top:515px;width:1px;height:24px;background:rgba(255,255,255,0.5);"></div>
<div class="r" style="left:328px;top:515px;width:1px;height:24px;background:#141420;"></div>
<div class="r" style="left:329px;top:515px;width:1px;height:24px;background:rgba(255,255,255,0.5);"></div>
<div class="r" style="left:968px;top:515px;width:1px;height:24px;background:#141420;"></div>
<div class="r" style="left:969px;top:515px;width:1px;height:24px;background:rgba(255,255,255,0.5);"></div>
<div class="r" style="left:9px;top:539px;width:960px;height:32px;background:#fff;"></div>
<div class="r" style="left:9px;top:539px;width:960px;height:16px;background:#C8C8C8;"></div>
<div class="t" style="left:13.5px;top:519.84px;font-size:12px;line-height:14px;color:#000;">Date</div>
<div class="t" style="left:93.5px;top:519.84px;font-size:12px;line-height:14px;color:#000;">Time</div>
<div class="t" style="left:149.5px;top:519.84px;font-size:12px;line-height:14px;color:#000;">User</div>
<div class="t" style="left:245.5px;top:519.84px;font-size:12px;line-height:14px;color:#000;">Mth</div>
<div class="t" style="left:309.5px;top:519.84px;font-size:12px;line-height:14px;color:#000;">Att</div>
<div class="t" style="left:333.5px;top:519.84px;font-size:12px;line-height:14px;color:#000;">Comment</div>
<div class="t" style="left:13px;top:539.84px;font-size:12px;line-height:14px;color:#000;">14/02/2024</div>
<div class="t" style="left:93px;top:539.84px;font-size:12px;line-height:14px;color:#000;"> 13:06</div>
<div class="t" style="left:149px;top:539.84px;font-size:12px;line-height:14px;color:#000;">Jane Smith</div>
<div class="t" style="left:245px;top:539.84px;font-size:12px;line-height:14px;color:#000;">Oct 2023</div>
<div class="t" style="left:333px;top:539.84px;font-size:12px;line-height:14px;color:#000;">Will call back in 2 weeks</div>
<div class="t" style="left:13px;top:555.84px;font-size:12px;line-height:14px;color:#000;">14/02/2024</div>
<div class="t" style="left:93px;top:555.84px;font-size:12px;line-height:14px;color:#000;"> 13:05</div>
<div class="t" style="left:149px;top:555.84px;font-size:12px;line-height:14px;color:#000;">Jane Smith</div>
<div class="t" style="left:245px;top:555.84px;font-size:12px;line-height:14px;color:#000;">Oct 2023</div>
<div class="t" style="left:333px;top:555.84px;font-size:12px;line-height:14px;color:#000;">Will call back in 2 weeks</div>
<div class="r" style="left:1px;top:706px;width:1000px;height:1px;background:#101010;"></div>
<div class="r" style="left:1px;top:707px;width:1000px;height:26px;background:#F0F0F0;"></div>
<div class="r" style="left:36px;top:709px;width:928px;height:22px;border-left:1px solid #a0a0a0;border-top:1px solid #a0a0a0;border-right:1px solid #fff;border-bottom:1px solid #fff;"></div>
<div class="t" style="left:39px;top:713.84px;font-size:12px;line-height:14px;color:#000;letter-spacing:-0.1px;">Ready...</div>
<div class="r" style="left:997px;top:721px;width:2px;height:2px;background:#a0a0a0;"></div>
<div class="r" style="left:993px;top:725px;width:2px;height:2px;background:#a0a0a0;"></div>
<div class="r" style="left:997px;top:725px;width:2px;height:2px;background:#a0a0a0;"></div>
<div class="r" style="left:989px;top:729px;width:2px;height:2px;background:#a0a0a0;"></div>
<div class="r" style="left:993px;top:729px;width:2px;height:2px;background:#a0a0a0;"></div>
<div class="r" style="left:997px;top:729px;width:2px;height:2px;background:#a0a0a0;"></div>
</body></html>
